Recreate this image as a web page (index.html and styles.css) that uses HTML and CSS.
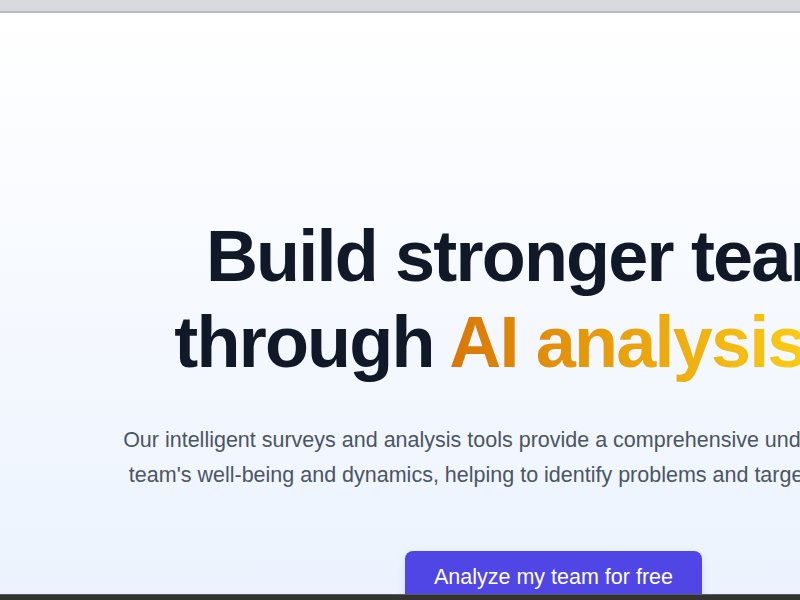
FILE: index.html
```html
<!DOCTYPE html>
<html lang="en">
<head>
    <meta charset="UTF-8">
    <meta name="viewport" content="width=device-width, initial-scale=1.0">
    <title>Team analysis</title>
    <link rel="stylesheet" href="styles.css">
</head>
<body>
    <div class="window">
        <div class="topbar"></div>
        <section class="hero">
            <div class="hero-inner">
                <h1 class="hero-title">
                    <span class="line">Build stronger teams</span>
                    <span class="line line-two">through <span class="accent">AI analysis</span></span>
                </h1>
                <p class="hero-text">Our intelligent surveys and analysis tools provide a comprehensive understanding of your team's well-being and dynamics, helping to identify problems and targeted interventions.</p>
                <a class="cta" href="#">Analyze my team for free</a>
            </div>
        </section>
        <div class="statusbar"></div>
    </div>
</body>
</html>
```

FILE: styles.css
```css
html, body {
    margin: 0;
    height: 100%;
    overflow: hidden;
}

body {
    font-family: "Liberation Sans", Arial, sans-serif;
    background: #fff;
}

.window {
    display: flex;
    flex-direction: column;
    height: 600px;
}

.topbar {
    height: 11px;
    background: #d9dadf;
    border-bottom: 2px solid #b9bac1;
    flex-shrink: 0;
}

.hero {
    flex: 1;
    overflow: hidden;
    background: linear-gradient(to bottom, #ffffff 0%, #ecf3fe 100%);
}

.hero-inner {
    width: 1096px;
    padding-top: 200px;
    text-align: center;
}

.hero-title {
    margin: 0 0 38px 0;
    font-size: 72px;
    line-height: 86px;
    font-weight: 700;
    letter-spacing: -1.8px;
    color: #111827;
}

.line {
    display: block;
}

.line-two {
    padding-right: 116px;
}

.accent {
    background: linear-gradient(to right, #d97706, #facc15);
    -webkit-background-clip: text;
    background-clip: text;
    color: transparent;
}

.hero-text {
    max-width: 896px;
    margin: 0 auto 58px auto;
    font-size: 21.5px;
    line-height: 35px;
    color: #4b5563;
}

.cta {
    display: inline-block;
    margin-left: 11px;
    padding: 12px 29px;
    font-size: 21.5px;
    line-height: 28px;
    color: #fff;
    text-decoration: none;
    background: #4f46e5;
    border-radius: 8px;
    box-shadow: 0 4px 10px rgba(79, 70, 229, 0.15);
}

.statusbar {
    height: 5px;
    background: #333;
    border-top: 1px solid #5c5c5c;
    flex-shrink: 0;
}
```
